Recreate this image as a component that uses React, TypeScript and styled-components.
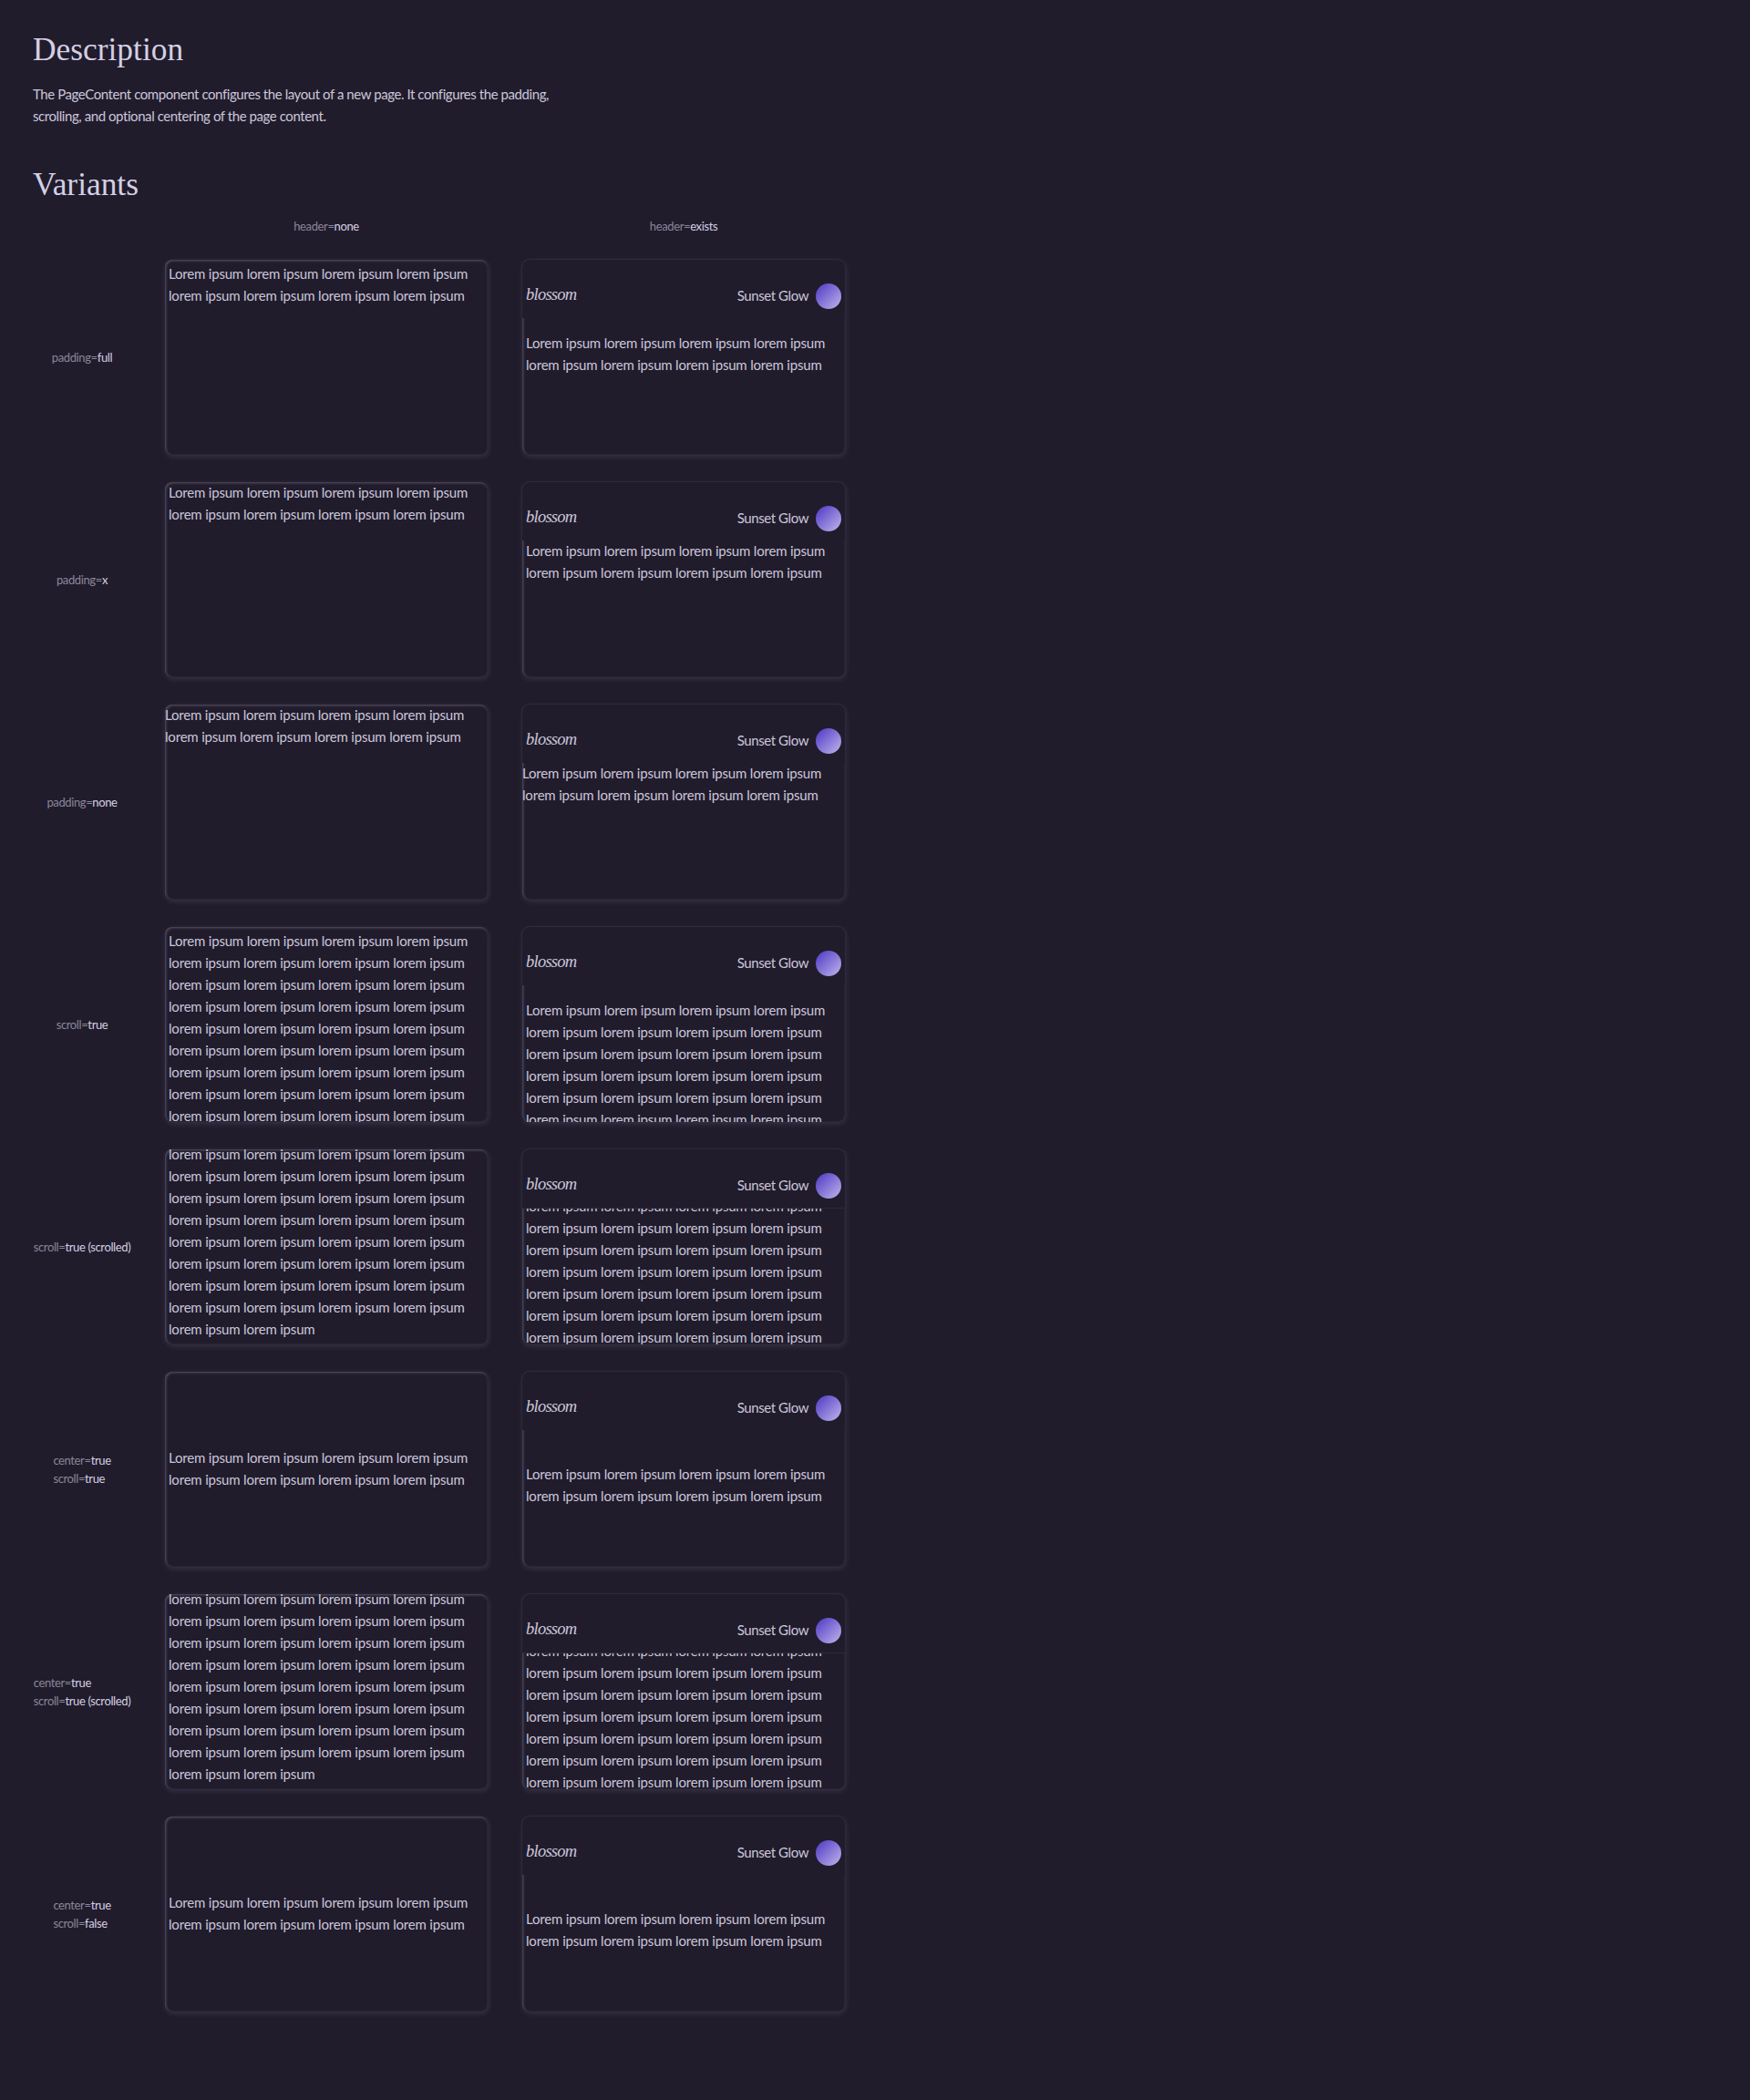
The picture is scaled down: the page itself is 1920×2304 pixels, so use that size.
import React, { useLayoutEffect, useRef } from 'react';
import styled, { createGlobalStyle, css } from 'styled-components';

const color = {
  background: '#201c2c',
  text: '#d5cfe3',
  body: '#ccc6da',
  muted: '#8b8699',
  line: '#2d2a39',
};

const GlobalStyle = createGlobalStyle`
  *, *::before, *::after {
    box-sizing: border-box;
  }
  body {
    margin: 0;
    background: ${color.background};
    color: ${color.body};
    font-family: Lato, 'Open Sans', sans-serif;
    font-size: 15px;
    letter-spacing: -0.43px;
    line-height: 24px;
  }
`;

const Page = styled.main`
  min-height: 2304px;
  padding: 34px 36px;
`;

const Heading = styled.h2`
  margin: 0;
  color: ${color.text};
  font-family: 'Liberation Serif', serif;
  font-size: 35.4px;
  font-weight: 400;
  letter-spacing: 0;
  line-height: 40px;
`;

const Description = styled.p`
  width: 600px;
  margin: 17px 0 43px;
`;

const VariantGrid = styled.div`
  display: grid;
  grid-template-columns: 108px 356px 356px;
  column-gap: 36px;
  row-gap: 28px;
  margin-top: 16px;
`;

const ColumnLabel = styled.div`
  display: flex;
  justify-content: center;
  height: 18px;
`;

const FirstColumnLabel = styled(ColumnLabel)`
  grid-column-start: 2;
`;

const RowLabel = styled.div`
  display: flex;
  align-items: center;
  justify-content: center;
`;

const PropList = styled.div`
  color: ${color.muted};
  font-size: 13px;
  letter-spacing: -0.38px;
  line-height: 20px;
  white-space: nowrap;
`;

const PropValue = styled.span`
  color: ${color.text};
`;

const Frame = styled.section`
  display: flex;
  flex-direction: column;
  height: 214px;
  margin: 1px;
  border-radius: 8px;
  box-shadow:
    inset 1px 1px 3px rgba(213, 207, 227, 0.32),
    1px 2px 6px rgba(213, 207, 227, 0.14);
`;

const Header = styled.header<{ $raised: boolean }>`
  display: flex;
  flex: none;
  align-items: center;
  justify-content: space-between;
  height: 66px;
  margin: -1px;
  padding: 16px 4px 0;
  border: 1px solid ${color.line};
  border-bottom-color: transparent;
  border-radius: 9px 9px 0 0;
  background: ${color.background} padding-box;
  ${(p) => p.$raised && css`
    border-bottom-color: ${color.line};
  `}
`;

const Wordmark = styled.span`
  padding-bottom: 5px;
  font-family: 'Liberation Serif', serif;
  font-size: 18.5px;
  font-style: italic;
  letter-spacing: -0.75px;
`;

const User = styled.div`
  display: flex;
  align-items: center;
  gap: 8px;
`;

const UserName = styled.span`
  padding-bottom: 2px;
`;

const Avatar = styled.span`
  width: 28px;
  height: 28px;
  border-radius: 50%;
  background: linear-gradient(135deg, #5541c6 8%, #b7abe9 92%);
`;

type Padding = 'full' | 'x' | 'none';

const paddings = {
  full: { plain: '3px 4px 5px', withHeader: '15px 4px 5px' },
  x: { plain: '0 4px', withHeader: '0 4px' },
  none: { plain: '0', withHeader: '0' },
};

const Content = styled.div<{ $padding: Padding; $header: boolean; $center: boolean; $raised: boolean }>`
  flex: 1;
  min-height: 0;
  overflow: hidden;
  padding: ${(p) => paddings[p.$padding][p.$header ? 'withHeader' : 'plain']};
  ${(p) => p.$padding !== 'full' && css`
    & > p { margin-top: -1px; }
  `}
  ${(p) => p.$center && css`
    display: flex;
    flex-direction: column;
    justify-content: center;
    padding: ${p.$header ? '0 4px 30px' : '0 4px 2px'};
  `}
  ${(p) => p.$header && p.$raised && css`
    clip-path: inset(1px 0 0);
  `}
`;

const Copy = styled.p`
  margin: 0;
  letter-spacing: -0.19px;
`;

const lorem = (pairs: number) => 'L' + Array(pairs).fill('lorem ipsum').join(' ').slice(1);

function PageContent({ header, padding = 'full', center = false, pairs, scroll = 0 }: {
  header: boolean;
  padding?: Padding;
  center?: boolean;
  pairs: number;
  scroll?: number;
}) {
  const ref = useRef<HTMLDivElement>(null);
  useLayoutEffect(() => {
    if (ref.current) ref.current.scrollTop = scroll;
  }, [scroll]);
  return (
    <Frame>
      {header && (
        <Header $raised={scroll > 0}>
          <Wordmark>blossom</Wordmark>
          <User>
            <UserName>Sunset Glow</UserName>
            <Avatar />
          </User>
        </Header>
      )}
      <Content ref={ref} $padding={padding} $header={header} $center={center} $raised={scroll > 0}>
        <Copy>{lorem(pairs)}</Copy>
      </Content>
    </Frame>
  );
}

function Props({ items }: { items: [string, string][] }) {
  return (
    <PropList>
      {items.map(([name, value]) => (
        <div key={name}>
          {name}=<PropValue>{value}</PropValue>
        </div>
      ))}
    </PropList>
  );
}

type Variant = {
  props: [string, string][];
  padding?: Padding;
  center?: boolean;
  pairs: number;
  scroll?: [number, number];
};

const variants: Variant[] = [
  { props: [['padding', 'full']], pairs: 8 },
  { props: [['padding', 'x']], padding: 'x', pairs: 8 },
  { props: [['padding', 'none']], padding: 'none', pairs: 8 },
  { props: [['scroll', 'true']], pairs: 50 },
  { props: [['scroll', 'true (scrolled)']], pairs: 50, scroll: [1000, 53] },
  { props: [['center', 'true'], ['scroll', 'true']], center: true, pairs: 8 },
  { props: [['center', 'true'], ['scroll', 'true (scrolled)']], pairs: 50, scroll: [1000, 53] },
  { props: [['center', 'true'], ['scroll', 'false']], center: true, pairs: 8 },
];

export default function App() {
  return (
    <>
      <GlobalStyle />
      <Page>
        <Heading>Description</Heading>
        <Description>
          The PageContent component configures the layout of a new page. It configures the padding,
          scrolling, and optional centering of the page content.
        </Description>
        <Heading>Variants</Heading>
        <VariantGrid>
          <FirstColumnLabel>
            <Props items={[['header', 'none']]} />
          </FirstColumnLabel>
          <ColumnLabel>
            <Props items={[['header', 'exists']]} />
          </ColumnLabel>
          {variants.map(({ props, scroll = [0, 0], ...rest }, i) => (
            <React.Fragment key={i}>
              <RowLabel>
                <Props items={props} />
              </RowLabel>
              <PageContent header={false} scroll={scroll[0]} {...rest} />
              <PageContent header scroll={scroll[1]} {...rest} />
            </React.Fragment>
          ))}
        </VariantGrid>
      </Page>
    </>
  );
}
